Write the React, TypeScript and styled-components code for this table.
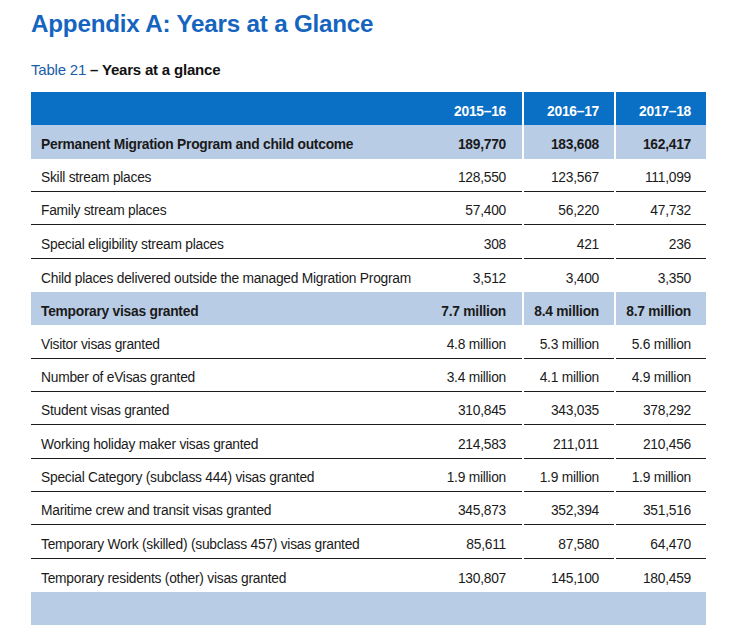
import React from "react";
import styled, { createGlobalStyle } from "styled-components";

const Global = createGlobalStyle`
  html, body { margin: 0; padding: 0; background: #ffffff; }
  body { font-family: "Liberation Sans", Arial, sans-serif; color: #1a1a1a; }
`;

const Page = styled.div`
  width: 740px;
  height: 634px;
  padding: 10px 0 0 31px;
  box-sizing: border-box;
  overflow: hidden;
`;

const Title = styled.h1`
  margin: 0;
  font-size: 24.2px;
  line-height: 28px;
  font-weight: 700;
  color: #1565bf;
  letter-spacing: -0.2px;
`;

const Caption = styled.div`
  margin-top: 23px;
  font-size: 15px;
  line-height: 18px;
  font-weight: 700;
  color: #111;
  letter-spacing: -0.2px;
`;

const CaptionNum = styled.span`
  font-weight: 400;
  color: #1a5ea8;
`;

const Table = styled.div`
  margin-top: 13px;
  width: 675px;
  display: flex;
  flex-direction: column;
`;

type Kind = "head" | "group" | "data" | "blank";

const Row = styled.div<{ $kind: Kind }>`
  display: grid;
  grid-template-columns: ${(p) => (p.$kind === "blank" ? "1fr" : "491px 90px 90px")};
  column-gap: 2px;
  height: 33.34px;
  font-size: 13.8px;
  letter-spacing: -0.25px;
  font-weight: ${(p) => (p.$kind === "data" ? 400 : 700)};
  color: ${(p) => (p.$kind === "head" ? "#ffffff" : "#1a1a1a")};
`;

const Cell = styled.div<{ $kind: Kind; $ruled?: boolean }>`
  box-sizing: border-box;
  display: flex;
  align-items: center;
  justify-content: space-between;
  padding: 5.5px 16px 0 10px;
  background: ${(p) =>
    p.$kind === "head" ? "#0a70c6" : p.$kind === "data" ? "#ffffff" : "#b9cce5"};
  border-bottom: ${(p) => (p.$ruled ? "1px solid #1c1c1c" : "none")};
`;

const NumCell = styled(Cell)`
  justify-content: flex-end;
  padding-right: 15px;
`;

const rows: { kind: Kind; label: string; v: [string, string, string] }[] = [
  { kind: "head", label: "", v: ["2015–16", "2016–17", "2017–18"] },
  { kind: "group", label: "Permanent Migration Program and child outcome", v: ["189,770", "183,608", "162,417"] },
  { kind: "data", label: "Skill stream places", v: ["128,550", "123,567", "111,099"] },
  { kind: "data", label: "Family stream places", v: ["57,400", "56,220", "47,732"] },
  { kind: "data", label: "Special eligibility stream places", v: ["308", "421", "236"] },
  { kind: "data", label: "Child places delivered outside the managed Migration Program", v: ["3,512", "3,400", "3,350"] },
  { kind: "group", label: "Temporary visas granted", v: ["7.7 million", "8.4 million", "8.7 million"] },
  { kind: "data", label: "Visitor visas granted", v: ["4.8 million", "5.3 million", "5.6 million"] },
  { kind: "data", label: "Number of eVisas granted", v: ["3.4 million", "4.1 million", "4.9 million"] },
  { kind: "data", label: "Student visas granted", v: ["310,845", "343,035", "378,292"] },
  { kind: "data", label: "Working holiday maker visas granted", v: ["214,583", "211,011", "210,456"] },
  { kind: "data", label: "Special Category (subclass 444) visas granted", v: ["1.9 million", "1.9 million", "1.9 million"] },
  { kind: "data", label: "Maritime crew and transit visas granted", v: ["345,873", "352,394", "351,516"] },
  { kind: "data", label: "Temporary Work (skilled) (subclass 457) visas granted", v: ["85,611", "87,580", "64,470"] },
  { kind: "data", label: "Temporary residents (other) visas granted", v: ["130,807", "145,100", "180,459"] },
];

export default function App() {
  return (
    <Page>
      <Global />
      <Title>Appendix A: Years at a Glance</Title>
      <Caption>
        <CaptionNum>Table 21</CaptionNum> – Years at a glance
      </Caption>
      <Table>
        {rows.map((r, i) => {
          const next = rows[i + 1];
          const ruled = r.kind === "data" && !!next && next.kind === "data";
          return (
            <Row key={i} $kind={r.kind}>
              <Cell $kind={r.kind} $ruled={ruled}>
                <span>{r.label}</span>
                <span>{r.v[0]}</span>
              </Cell>
              <NumCell $kind={r.kind} $ruled={ruled}>{r.v[1]}</NumCell>
              <NumCell $kind={r.kind} $ruled={ruled}>{r.v[2]}</NumCell>
            </Row>
          );
        })}
        <Row $kind="blank">
          <Cell $kind="blank" />
        </Row>
      </Table>
    </Page>
  );
}
